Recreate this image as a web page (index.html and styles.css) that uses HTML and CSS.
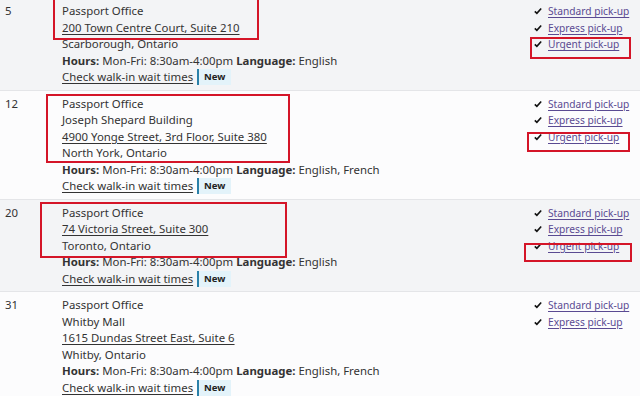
FILE: index.html
```html
<!DOCTYPE html>
<html lang="en">
<head>
<meta charset="utf-8">
<title>Passport Offices</title>
<link rel="stylesheet" href="styles.css">
</head>
<body>
<div class="list">
  <div class="row alt first">
    <div class="num">5</div>
    <div class="info">
      <div>Passport Office</div>
      <div><a class="addr" href="#">200 Town Centre Court, Suite 210</a></div>
      <div>Scarborough, Ontario</div>
      <div><b>Hours:</b> Mon-Fri: 8:30am-4:00pm <b>Language:</b> English</div>
      <div class="walk"><a class="addr" href="#">Check walk-in wait times</a><span class="badge">New</span></div>
    </div>
    <ul class="svc">
      <li><svg class="chk" viewBox="0 0 10 10"><path d="M1 5.4 L3.6 8 L9 1.8" /></svg><a href="#">Standard pick-up</a></li>
      <li><svg class="chk" viewBox="0 0 10 10"><path d="M1 5.4 L3.6 8 L9 1.8" /></svg><a href="#">Express pick-up</a></li>
      <li><svg class="chk" viewBox="0 0 10 10"><path d="M1 5.4 L3.6 8 L9 1.8" /></svg><a href="#">Urgent pick-up</a></li>
    </ul>
    <span class="mark m1a"></span>
    <span class="mark m1b"></span>
  </div>

  <div class="row">
    <div class="num">12</div>
    <div class="info">
      <div>Passport Office</div>
      <div>Joseph Shepard Building</div>
      <div><a class="addr" href="#">4900 Yonge Street, 3rd Floor, Suite 380</a></div>
      <div>North York, Ontario</div>
      <div><b>Hours:</b> Mon-Fri: 8:30am-4:00pm <b>Language:</b> English, French</div>
      <div class="walk"><a class="addr" href="#">Check walk-in wait times</a><span class="badge">New</span></div>
    </div>
    <ul class="svc">
      <li><svg class="chk" viewBox="0 0 10 10"><path d="M1 5.4 L3.6 8 L9 1.8" /></svg><a href="#">Standard pick-up</a></li>
      <li><svg class="chk" viewBox="0 0 10 10"><path d="M1 5.4 L3.6 8 L9 1.8" /></svg><a href="#">Express pick-up</a></li>
      <li><svg class="chk" viewBox="0 0 10 10"><path d="M1 5.4 L3.6 8 L9 1.8" /></svg><a href="#">Urgent pick-up</a></li>
    </ul>
    <span class="mark m2a"></span>
    <span class="mark m2b"></span>
  </div>

  <div class="row alt">
    <div class="num">20</div>
    <div class="info">
      <div>Passport Office</div>
      <div><a class="addr" href="#">74 Victoria Street, Suite 300</a></div>
      <div>Toronto, Ontario</div>
      <div><b>Hours:</b> Mon-Fri: 8:30am-4:00pm <b>Language:</b> English</div>
      <div class="walk"><a class="addr" href="#">Check walk-in wait times</a><span class="badge">New</span></div>
    </div>
    <ul class="svc">
      <li><svg class="chk" viewBox="0 0 10 10"><path d="M1 5.4 L3.6 8 L9 1.8" /></svg><a href="#">Standard pick-up</a></li>
      <li><svg class="chk" viewBox="0 0 10 10"><path d="M1 5.4 L3.6 8 L9 1.8" /></svg><a href="#">Express pick-up</a></li>
      <li><svg class="chk" viewBox="0 0 10 10"><path d="M1 5.4 L3.6 8 L9 1.8" /></svg><a href="#">Urgent pick-up</a></li>
    </ul>
    <span class="mark m3a"></span>
    <span class="mark m3b"></span>
  </div>

  <div class="row">
    <div class="num">31</div>
    <div class="info">
      <div>Passport Office</div>
      <div>Whitby Mall</div>
      <div><a class="addr" href="#">1615 Dundas Street East, Suite 6</a></div>
      <div>Whitby, Ontario</div>
      <div><b>Hours:</b> Mon-Fri: 8:30am-4:00pm <b>Language:</b> English, French</div>
      <div class="walk"><a class="addr" href="#">Check walk-in wait times</a><span class="badge">New</span></div>
    </div>
    <ul class="svc">
      <li><svg class="chk" viewBox="0 0 10 10"><path d="M1 5.4 L3.6 8 L9 1.8" /></svg><a href="#">Standard pick-up</a></li>
      <li><svg class="chk" viewBox="0 0 10 10"><path d="M1 5.4 L3.6 8 L9 1.8" /></svg><a href="#">Express pick-up</a></li>
    </ul>
  </div>
</div>
</body>
</html>
```

FILE: styles.css
```css
* { box-sizing: border-box; }
html, body { margin: 0; padding: 0; }
body {
  background: #fcfcfd;
  font-family: "Noto Sans", "Open Sans", sans-serif;
  font-size: 11.4px;
  line-height: 16.5px;
  color: #333;
  overflow: hidden;
}
.list { display: flex; flex-direction: column; }
.row {
  position: relative;
  display: grid;
  grid-template-columns: 62px 1fr 106px;
  padding: 5px 0 4px 0;
  border-top: 1px solid #e4e5e8;
  background: #fcfcfd;
}
.row.alt { background: #f3f4f6; }
.row.first { margin-top: -2px; border-top: none; }
.num { padding-left: 5px; }
.info b { font-weight: 700; }
a.addr { color: #333; text-decoration: underline; text-underline-offset: 2px; text-decoration-thickness: 1px; }
.walk { display: flex; align-items: center; }
.badge {
  display: inline-block;
  margin-left: 4px;
  padding: 0 6px 0 5px;
  border-left: 2px solid #2b80a8;
  background: #e3f3fa;
  font-size: 9.5px;
  font-weight: 700;
  line-height: 16px;
  color: #222;
}
.svc { list-style: none; margin: 0; padding: 0; }
.svc li { display: flex; align-items: center; gap: 6px; font-size: 10.2px; }
.svc a { color: #5a4a92; text-decoration: underline; text-underline-offset: 2px; }
.chk { width: 8px; height: 8px; flex: none; }
.chk path { fill: none; stroke: #111; stroke-width: 2; }
.mark { position: absolute; border: 2px solid #d41528; }
.m1a { left: 53px; top: 0px; width: 206px; height: 42px; }
.m1b { left: 530px; top: 39px; width: 101px; height: 22px; }
.m2a { left: 46px; top: 3px; width: 244px; height: 69px; }
.m2b { left: 527px; top: 41px; width: 103px; height: 20px; }
.m3a { left: 40px; top: 2px; width: 247px; height: 56px; }
.m3b { left: 524px; top: 43px; width: 108px; height: 19px; }
```
